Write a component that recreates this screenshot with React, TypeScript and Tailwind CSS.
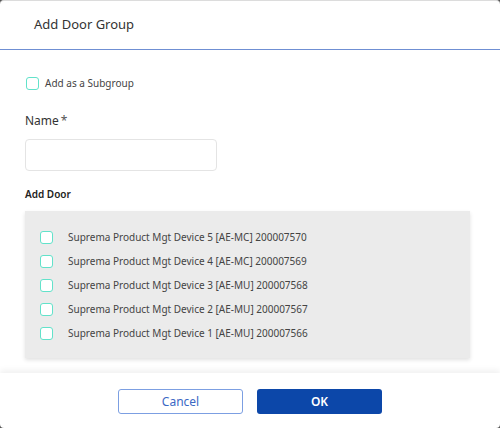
const devices = [
  { name: 'Suprema Product Mgt Device 5', code: 'AE-MC', id: '200007570' },
  { name: 'Suprema Product Mgt Device 4', code: 'AE-MC', id: '200007569' },
  { name: 'Suprema Product Mgt Device 3', code: 'AE-MU', id: '200007568' },
  { name: 'Suprema Product Mgt Device 2', code: 'AE-MU', id: '200007567' },
  { name: 'Suprema Product Mgt Device 1', code: 'AE-MU', id: '200007566' },
];

function Check() {
  return <span className="block h-[13px] w-[13px] shrink-0 rounded-[3px] border-[1.5px] border-[#62e2ca] bg-white" />;
}

export default function App() {
  return (
    <div className="h-[428px] w-[500px] bg-[#555]" style={{ fontFamily: '"Noto Sans", "Open Sans", sans-serif' }}>
      <div className="flex h-full w-full flex-col overflow-hidden rounded-[4px] border-t border-[#dcdcdc] bg-white">
        <header className="flex h-[49px] items-center border-b border-[#6f8fd3] pl-[34px]">
          <h1 className="text-[13px] text-[#333]">Add Door Group</h1>
        </header>

        <div className="flex-1 px-[25px] pt-[26px]">
          <label className="flex items-center gap-[6px] pl-px">
            <Check />
            <span className="text-[10px] text-[#444]">Add as a Subgroup</span>
          </label>

          <p className="mt-[21px] text-[12px] text-[#333]">
            Name<span className="ml-[2px] text-[#555]">*</span>
          </p>
          <input className="mt-[9px] block h-[32px] w-[192px] rounded-[4px] border border-[#e4e4e4] px-2 text-[12px] outline-none" />

          <p className="mt-[16px] text-[10px] font-semibold text-[#222]">Add Door</p>

          <div className="mt-[9px] h-[147px] w-[445px] bg-[#ebebeb] pl-[15px] pt-[20px] shadow-[0_2px_4px_rgba(0,0,0,0.12)]">
            <ul className="flex flex-col gap-[11px]">
              {devices.map((d) => (
                <li key={d.id} className="flex h-[13px] items-center gap-[15px]">
                  <Check />
                  <span className="text-[10px] text-[#444]">
                    {d.name} [{d.code}] {d.id}
                  </span>
                </li>
              ))}
            </ul>
          </div>
        </div>

        <footer className="flex h-[55px] justify-center gap-[14px] pt-[16px] shadow-[0_-3px_6px_rgba(0,0,0,0.06)]">
          <button className="h-[25px] w-[125px] rounded-[3px] border border-[#7c9fe2] text-[12px] text-[#3a68c4]" type="button">
            Cancel
          </button>
          <button className="h-[25px] w-[125px] rounded-[3px] bg-[#0c47a9] text-[12px] font-semibold text-white" type="button">
            OK
          </button>
        </footer>
      </div>
    </div>
  );
}
